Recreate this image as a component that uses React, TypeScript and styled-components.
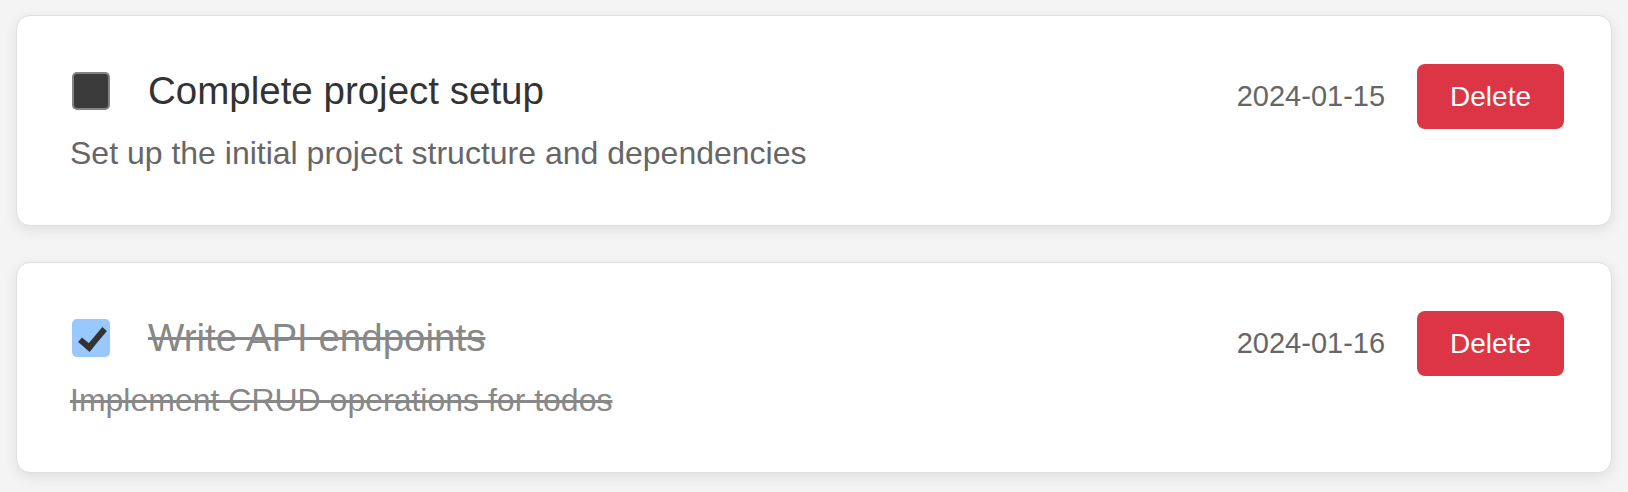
import React, { useState } from "react";
import styled, { createGlobalStyle } from "styled-components";

const GlobalStyle = createGlobalStyle`
  html, body {
    margin: 0;
    padding: 0;
    background: #f4f4f4;
  }
  body {
    font-family: "Liberation Sans", Arial, Helvetica, sans-serif;
  }
`;

const List = styled.div`
  display: flex;
  flex-direction: column;
  gap: 36px;
  padding: 15px 16px 16px 16px;
`;

const Card = styled.div`
  background: #ffffff;
  border: 1px solid #dfdfdf;
  border-radius: 14px;
  box-shadow: 0 4px 14px rgba(0, 0, 0, 0.09);
  padding: 48px 47px 53px 47px;
`;

const Row = styled.div`
  display: flex;
  justify-content: space-between;
  align-items: flex-start;
`;

const Left = styled.div`
  display: flex;
  align-items: center;
  margin-top: 5px;
`;

const Check = styled.input`
  appearance: none;
  -webkit-appearance: none;
  position: relative;
  box-sizing: border-box;
  width: 38px;
  height: 38px;
  margin: 0 38px 0 8px;
  flex-shrink: 0;
  border-radius: 5px;
  border: 2px solid #838383;
  background: #3b3b3b;
  cursor: pointer;

  &:checked {
    background: #99c8ff;
    border-color: #99c8ff;
  }

  &:checked::after {
    content: "";
    position: absolute;
    left: 11px;
    top: 2px;
    width: 9px;
    height: 21px;
    border-right: 6px solid #333333;
    border-bottom: 6px solid #333333;
    transform: rotate(40deg);
  }
`;

const Title = styled.span<{ $done: boolean }>`
  font-size: 38.5px;
  line-height: 44px;
  color: ${(p) => (p.$done ? "#888888" : "#333333")};
  text-decoration: ${(p) => (p.$done ? "line-through" : "none")};
`;

const Right = styled.div`
  display: flex;
  align-items: center;
  gap: 32px;
`;

const DateText = styled.span`
  font-size: 29px;
  line-height: 33px;
  color: #666666;
`;

const DeleteButton = styled.button`
  font-family: "Liberation Sans", Arial, Helvetica, sans-serif;
  font-size: 28px;
  line-height: 33px;
  color: #ffffff;
  background: #dc3545;
  border: none;
  border-radius: 8px;
  padding: 16px 33px;
  cursor: pointer;
`;

const Description = styled.p<{ $done: boolean }>`
  margin: 6px 0 0 0;
  padding-left: 6px;
  font-size: 32px;
  line-height: 37px;
  color: ${(p) => (p.$done ? "#888888" : "#666666")};
  text-decoration: ${(p) => (p.$done ? "line-through" : "none")};
`;

type Todo = {
  id: number;
  title: string;
  description: string;
  date: string;
  done: boolean;
};

const initial: Todo[] = [
  {
    id: 1,
    title: "Complete project setup",
    description: "Set up the initial project structure and dependencies",
    date: "2024-01-15",
    done: false,
  },
  {
    id: 2,
    title: "Write API endpoints",
    description: "Implement CRUD operations for todos",
    date: "2024-01-16",
    done: true,
  },
];

export default function App() {
  const [todos, setTodos] = useState<Todo[]>(initial);

  const toggle = (id: number) =>
    setTodos((t) => t.map((x) => (x.id === id ? { ...x, done: !x.done } : x)));
  const remove = (id: number) => setTodos((t) => t.filter((x) => x.id !== id));

  return (
    <>
      <GlobalStyle />
      <List>
        {todos.map((todo) => (
          <Card key={todo.id}>
            <Row>
              <Left>
                <Check
                  type="checkbox"
                  checked={todo.done}
                  onChange={() => toggle(todo.id)}
                />
                <Title $done={todo.done}>{todo.title}</Title>
              </Left>
              <Right>
                <DateText>{todo.date}</DateText>
                <DeleteButton onClick={() => remove(todo.id)}>Delete</DeleteButton>
              </Right>
            </Row>
            <Description $done={todo.done}>{todo.description}</Description>
          </Card>
        ))}
      </List>
    </>
  );
}
